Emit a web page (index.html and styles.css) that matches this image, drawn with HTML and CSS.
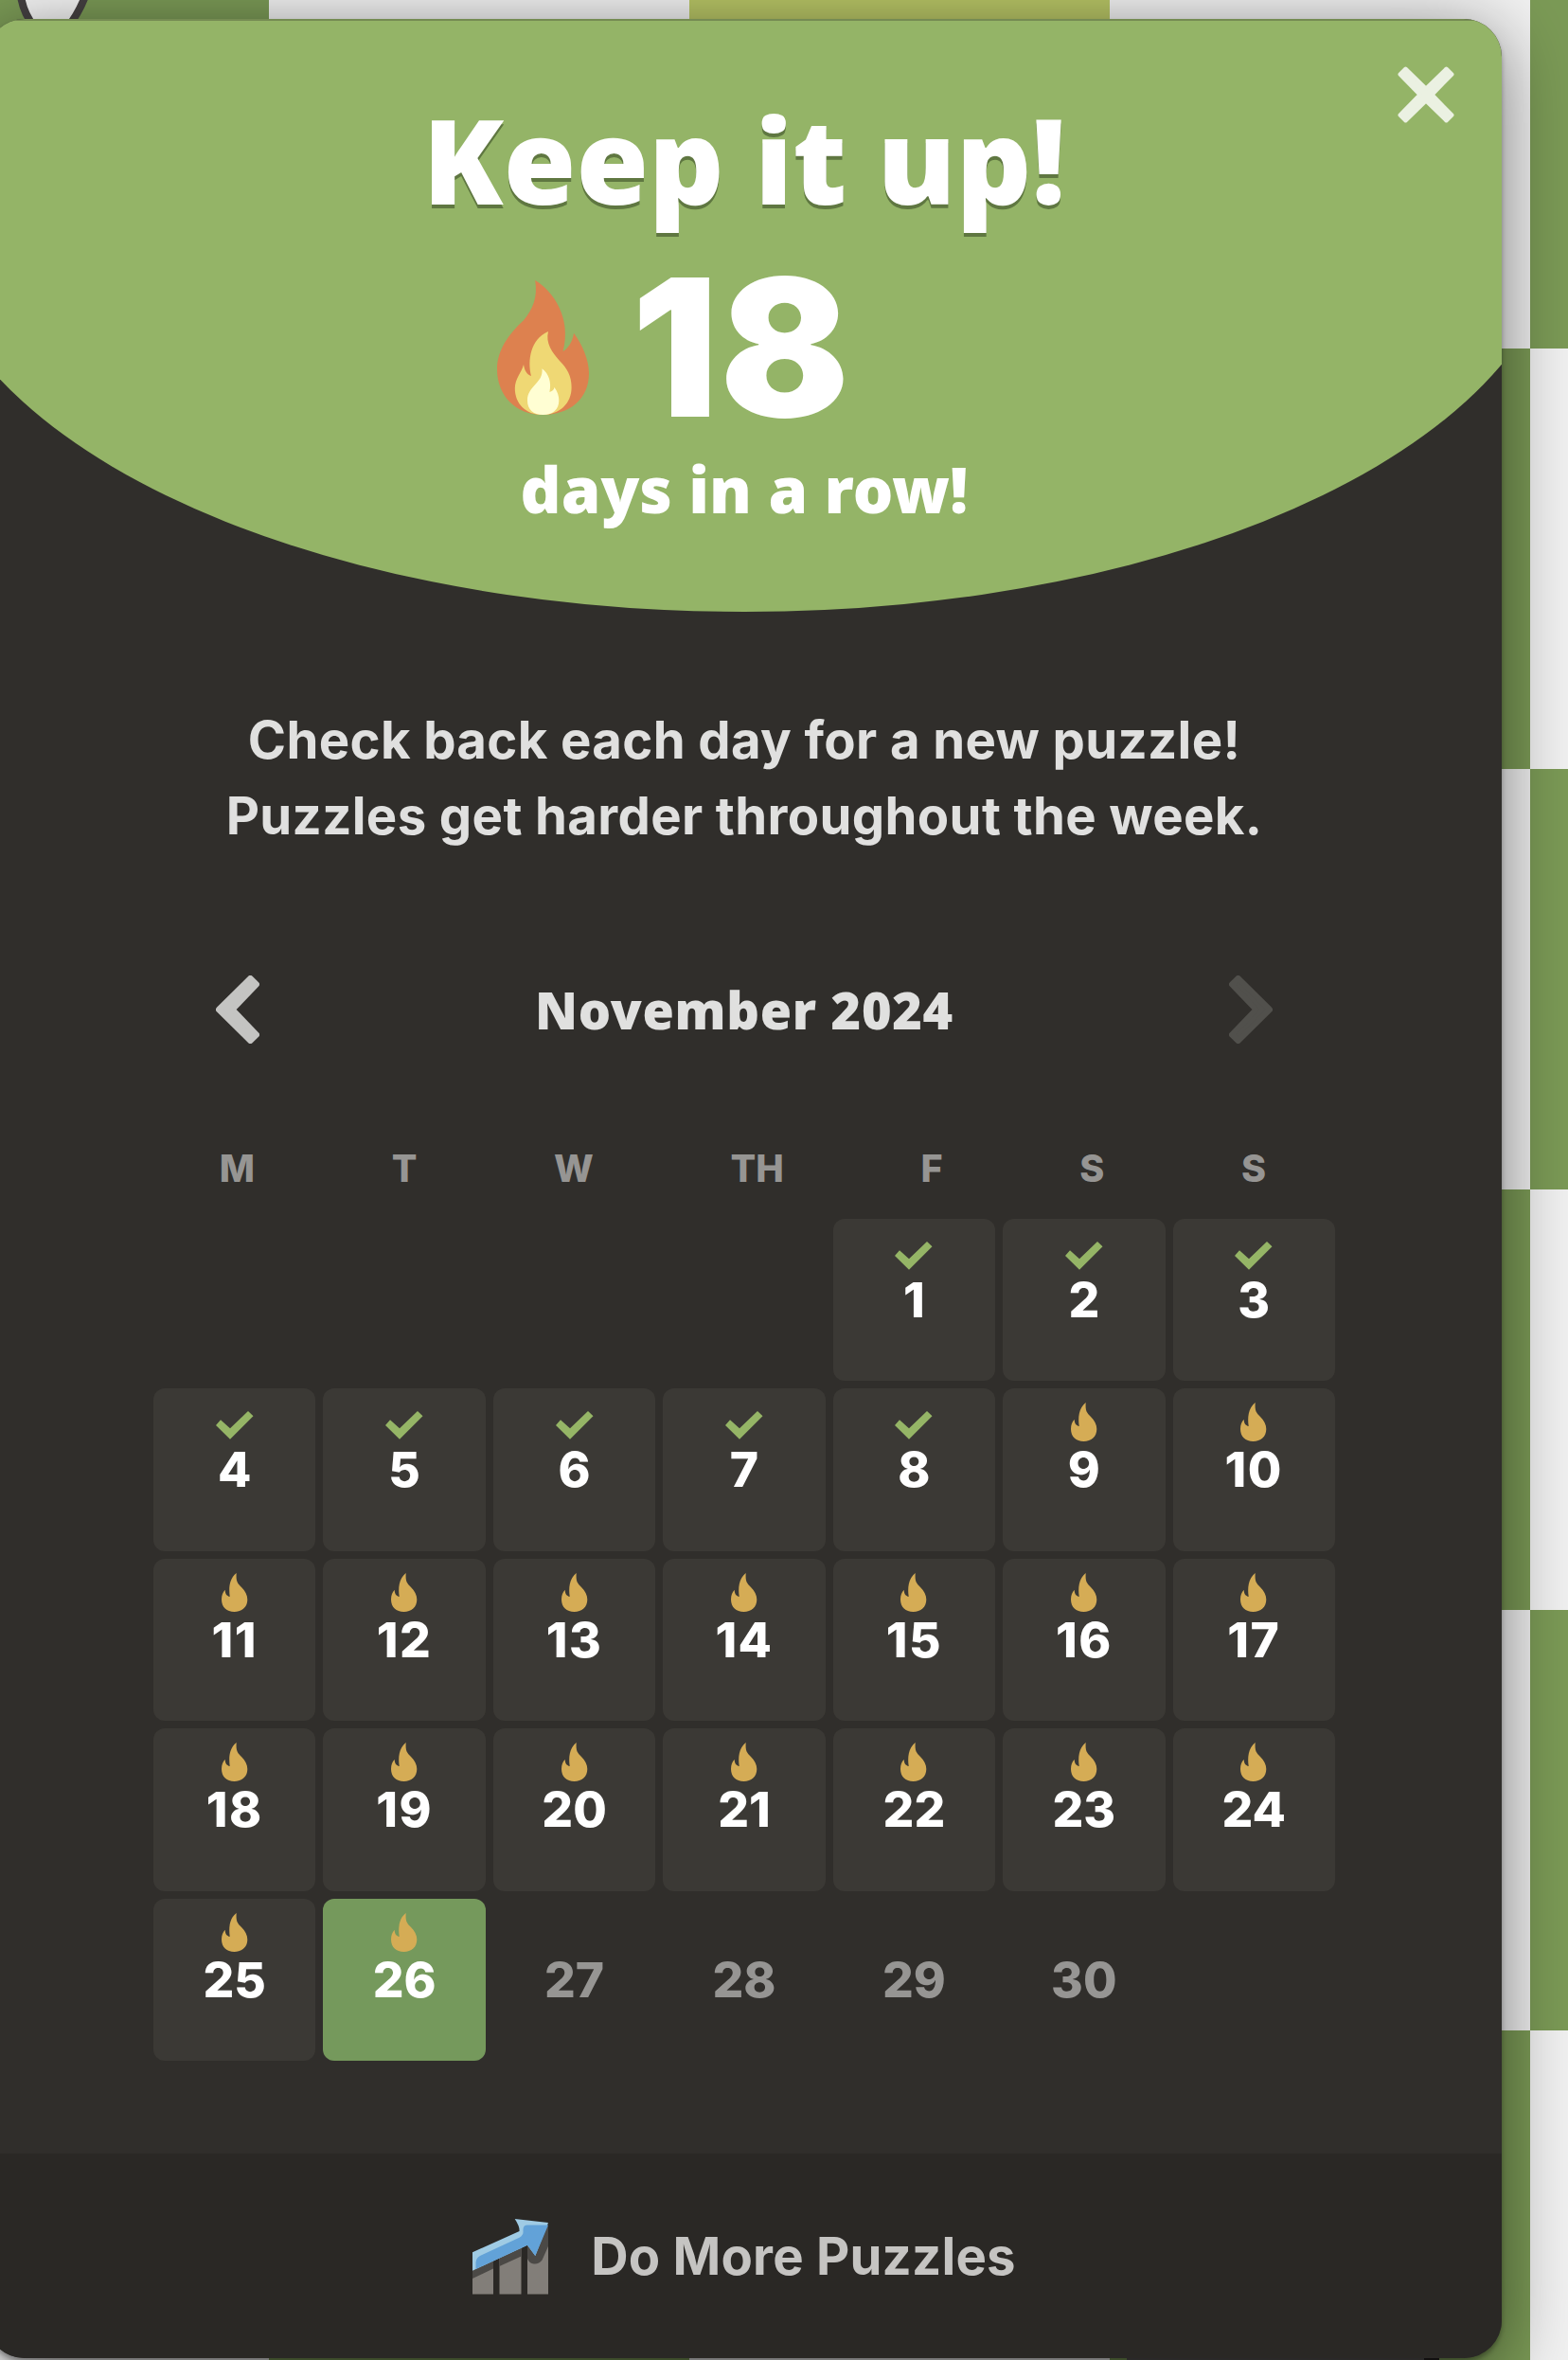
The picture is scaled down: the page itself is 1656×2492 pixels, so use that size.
FILE: index.html
```html
<!DOCTYPE html>
<html lang="en">
<head>
<meta charset="utf-8">
<title>Daily Puzzle Streak</title>
<link rel="stylesheet" href="styles.css">
</head>
<body>
<svg class="board-details" viewBox="0 0 1656 2492" aria-hidden="true">
  <rect x="728" y="0" width="444" height="368" fill="#b7c465"/>
  <path d="M22 -4C24 9 28 18 36 28H72C80 18 85 9 90 -4Z" fill="#f4f4f4" stroke="#454142" stroke-width="8"/>
  <path d="M1190 2489H1504V2494H1190Z" fill="#565352"/>
  <path d="M1504 2489H1520V2494H1504Z" fill="#25201f"/>
</svg>
<main class="modal">
  <header class="banner">
    <h1 class="banner-title">Keep it up!</h1>
    <div class="streak">
      <svg class="streak-flame" viewBox="0 0 97 142" aria-hidden="true">
        <path fill="#dd814f" d="M40.2 0C59 11 79 40 69.6 75C75 72 80 64 81 55.7C90 68 97 84 97 98C97 126 76 142 48 142C20 142 0 122 0 94C0 74 12 57 28 42.300C38 30 43 18 40.200 0Z"/>
        <path fill="#efd874" d="M54 54C51 66 58 76 66 85C74 93 78.600 101 78.600 113C78.600 130 66 142 48 142C30 142 18.800 130 18.800 114C18.800 104 26 97 28 89C29 95 31 99 36 101C32 85 35 62 54 54Z"/>
        <path fill="#fffed3" d="M47.500 93.300C55 99 57.500 108 55.400 118C58 117 60 116 60.500 113C64 118 65.300 122 65.300 127C65.300 136 59 142 48.500 142C38 142 32 136 32 127C32 111 49 109 47.500 93.300Z"/>
      </svg>
      <span class="streak-count">18</span>
    </div>
    <p class="banner-sub">days in a row!</p>
  </header>
  <button class="close" aria-label="Close">
    <svg viewBox="0 0 60 60"><path d="M8.500 2.500L30 23.500L51.500 2.500L57.500 8.500L36.500 30L57.500 51.500L51.500 57.500L30 36.500L8.500 57.500L2.500 51.500L23.500 30L2.500 8.500Z"/></svg>
  </button>
  <p class="message">Check back each day for a new puzzle!<br>Puzzles get harder throughout the week.</p>
  <nav class="month-nav">
    <svg class="chevron" viewBox="0 0 46 72"><path d="M36.400 3L43 9.500L17.500 36L43 62.500L36.400 69L3 36Z"/></svg>
    <h2 class="month">November 2024</h2>
    <svg class="chevron chevron-next" viewBox="0 0 46 72"><path d="M9.600 3L3 9.500L28.500 36L3 62.500L9.600 69L43 36Z"/></svg>
  </nav>
  <div class="weekdays"><span>M</span><span>T</span><span>W</span><span>TH</span><span>F</span><span>S</span><span>S</span></div>
  <section class="days" id="days"></section>
  <footer class="footer">
    <svg class="chart" viewBox="0 0 80 81" aria-hidden="true">
      <path fill="#827e79" d="M0 50L22 40V80.500H0ZM28.500 36L51.500 26V80.500H28.500ZM58 26H80V80.500H58Z"/>
      <path fill="#4b4946" d="M0 50L22 38V53.500L0 64ZM28.500 36L51.500 24V40.500L28.500 51ZM58 24L80 8V30L73.500 44.500Q70 49 65 48.500Q60 48 58 43Z"/>
      <path fill="#9fcbe4" d="M0 36.300L49.500 14Q50 9 44.700 1L80 5L66.300 40L58 28.700L0 55.700Z"/>
      <path fill="#62a2d8" d="M3.500 54V47Q4 42 8 40L50 20.500Q54 18 53.500 14Q53 7.500 58 7.500L80 7.500L66.300 40L58 28.700Z"/>
    </svg>
    <span class="footer-label">Do More Puzzles</span>
  </footer>
</main>
<script src="calendar.js"></script>
</body>
</html>
```
FILE: styles.css
```css
* {
  box-sizing: border-box;
}

body {
  margin: 0;
  height: 2492px;
  overflow: hidden;
  background: repeating-conic-gradient(#f1f1f1 0 25%, #7b9a56 0 50%) -160px -76px / 888px 888px;
  font-family: Inter, "Liberation Sans", sans-serif;
}

h1, h2, p {
  margin: 0;
}

.board-details {
  position: absolute;
  inset: 0;
  width: 1656px;
  height: 2492px;
}

.modal {
  position: relative;
  display: flex;
  flex-direction: column;
  align-items: center;
  width: 1600px;
  height: 2470px;
  margin: 20px 0 0 -14px;
  overflow: hidden;
  border-radius: 40px;
  background: #302e2b;
  box-shadow: 0 14px 76px rgba(0, 0, 0, 0.5), 0 4px 5px rgba(0, 0, 0, 0.3);
}

.banner {
  flex: none;
  width: 1728px;
  height: 626px;
  padding-top: 76px;
  border-top: 2px solid #758b52;
  border-radius: 0 0 50% 50% / 0 0 420px 420px;
  background: #94b467;
  color: #fff;
  text-align: center;
}

.banner-title {
  font: 900 124px/140px "Noto Sans", sans-serif;
  text-shadow: 0 4px 0 #5f7741;
}

.streak {
  display: flex;
  align-items: flex-start;
  margin: 28px 0 0 603px;
}

.streak-flame {
  width: 97px;
  height: 142px;
  margin: 30px 45px 0 0;
}

.streak-count {
  font-size: 202px;
  font-weight: 900;
  line-height: 201px;
  letter-spacing: 2px;
}

.banner-sub {
  margin-top: 9px;
  font: 900 67px/80px "Noto Sans", sans-serif;
}

.close {
  position: absolute;
  top: 50px;
  right: 50px;
  width: 60px;
  height: 60px;
  padding: 0;
  border: 0;
  background: none;
}

.close svg {
  display: block;
  fill: #ebf1e2;
  stroke: #ebf1e2;
  stroke-width: 4;
  stroke-linejoin: round;
}

.message {
  margin-top: 95px;
  color: #e0e0df;
  font-size: 54.5px;
  font-weight: 700;
  line-height: 80px;
  letter-spacing: 0.35px;
  text-align: center;
  white-space: nowrap;
}

.month-nav {
  display: flex;
  align-items: center;
  justify-content: space-between;
  width: 100%;
  height: 72px;
  margin-top: 129px;
  padding: 0 242px;
}

.chevron {
  width: 46px;
  height: 72px;
  fill: #c4c4c2;
  stroke: #c4c4c2;
  stroke-width: 6;
  stroke-linejoin: round;
}

.chevron-next {
  fill: #51504c;
  stroke: #51504c;
}

.month {
  color: #e0e0df;
  font: 900 54px/72px "Noto Sans", sans-serif;
  letter-spacing: 0.7px;
}

.weekdays {
  display: flex;
  justify-content: space-around;
  width: 1250px;
  margin: 107.5px 0 0 -3px;
  color: #969593;
  font-size: 39.5px;
  font-weight: 800;
  line-height: 48px;
}

.days {
  display: grid;
  grid-template-columns: repeat(7, 1fr);
  grid-auto-rows: 171.6px;
  gap: 8px;
  width: 1248px;
  margin-top: 29px;
}

.day {
  display: flex;
  flex-direction: column;
  align-items: center;
  border-radius: 12px;
  color: #969593;
  font-size: 51.5px;
  font-weight: 800;
  line-height: 61px;
}

.day-first {
  grid-column-start: 5;
}

.day-done {
  background: #3b3935;
  color: #fff;
}

.day-teen {
  letter-spacing: 1.5px;
}

.day-today {
  background: #75995c;
}

.day-icon {
  width: 40px;
  height: 55px;
  overflow: visible;
}

.icon-check {
  fill: #95b566;
}

.icon-flame {
  fill: #d5ac55;
}

.footer {
  display: flex;
  align-items: center;
  justify-content: center;
  gap: 45px;
  width: 100%;
  height: 216px;
  margin-top: auto;
  background: #2a2825;
  color: #c5c4c2;
  font-size: 54.5px;
  font-weight: 700;
  letter-spacing: 0.2px;
}

.chart {
  width: 80px;
  height: 81px;
}
```
FILE: calendar.js
```js
const icons = {
  check: '<path d="M0 39L5 33.300L15 42.300L34 24L39.500 29.300L15 53.700Z"/>',
  flame: '<path d="M21.700 15C21 24 23 26 27 30C31 34 33.300 38 33.300 43C33.300 51 27.500 56 19.500 56C11.500 56 6 51 6 43C6 38 7.500 35 9.700 32.700C9.700 37 11.500 39 14.700 40C13.500 31 14 21 21.700 15Z"/>'
};

const today = 26;
const grid = document.getElementById('days');

for (let n = 1; n <= 30; n++) {
  const day = document.createElement('div');
  day.className = 'day';
  if (n === 1) day.classList.add('day-first');
  if (n <= today) day.classList.add('day-done');
  if (n >= 10 && n < 20) day.classList.add('day-teen');
  if (n === today) day.classList.add('day-today');
  const icon = n > today ? '' : n < 9 ? 'check' : 'flame';
  day.innerHTML = `<svg class="day-icon icon-${icon || 'none'}" viewBox="0 0 40 55">${icons[icon] || ''}</svg><span>${n}</span>`;
  grid.append(day);
}
```
